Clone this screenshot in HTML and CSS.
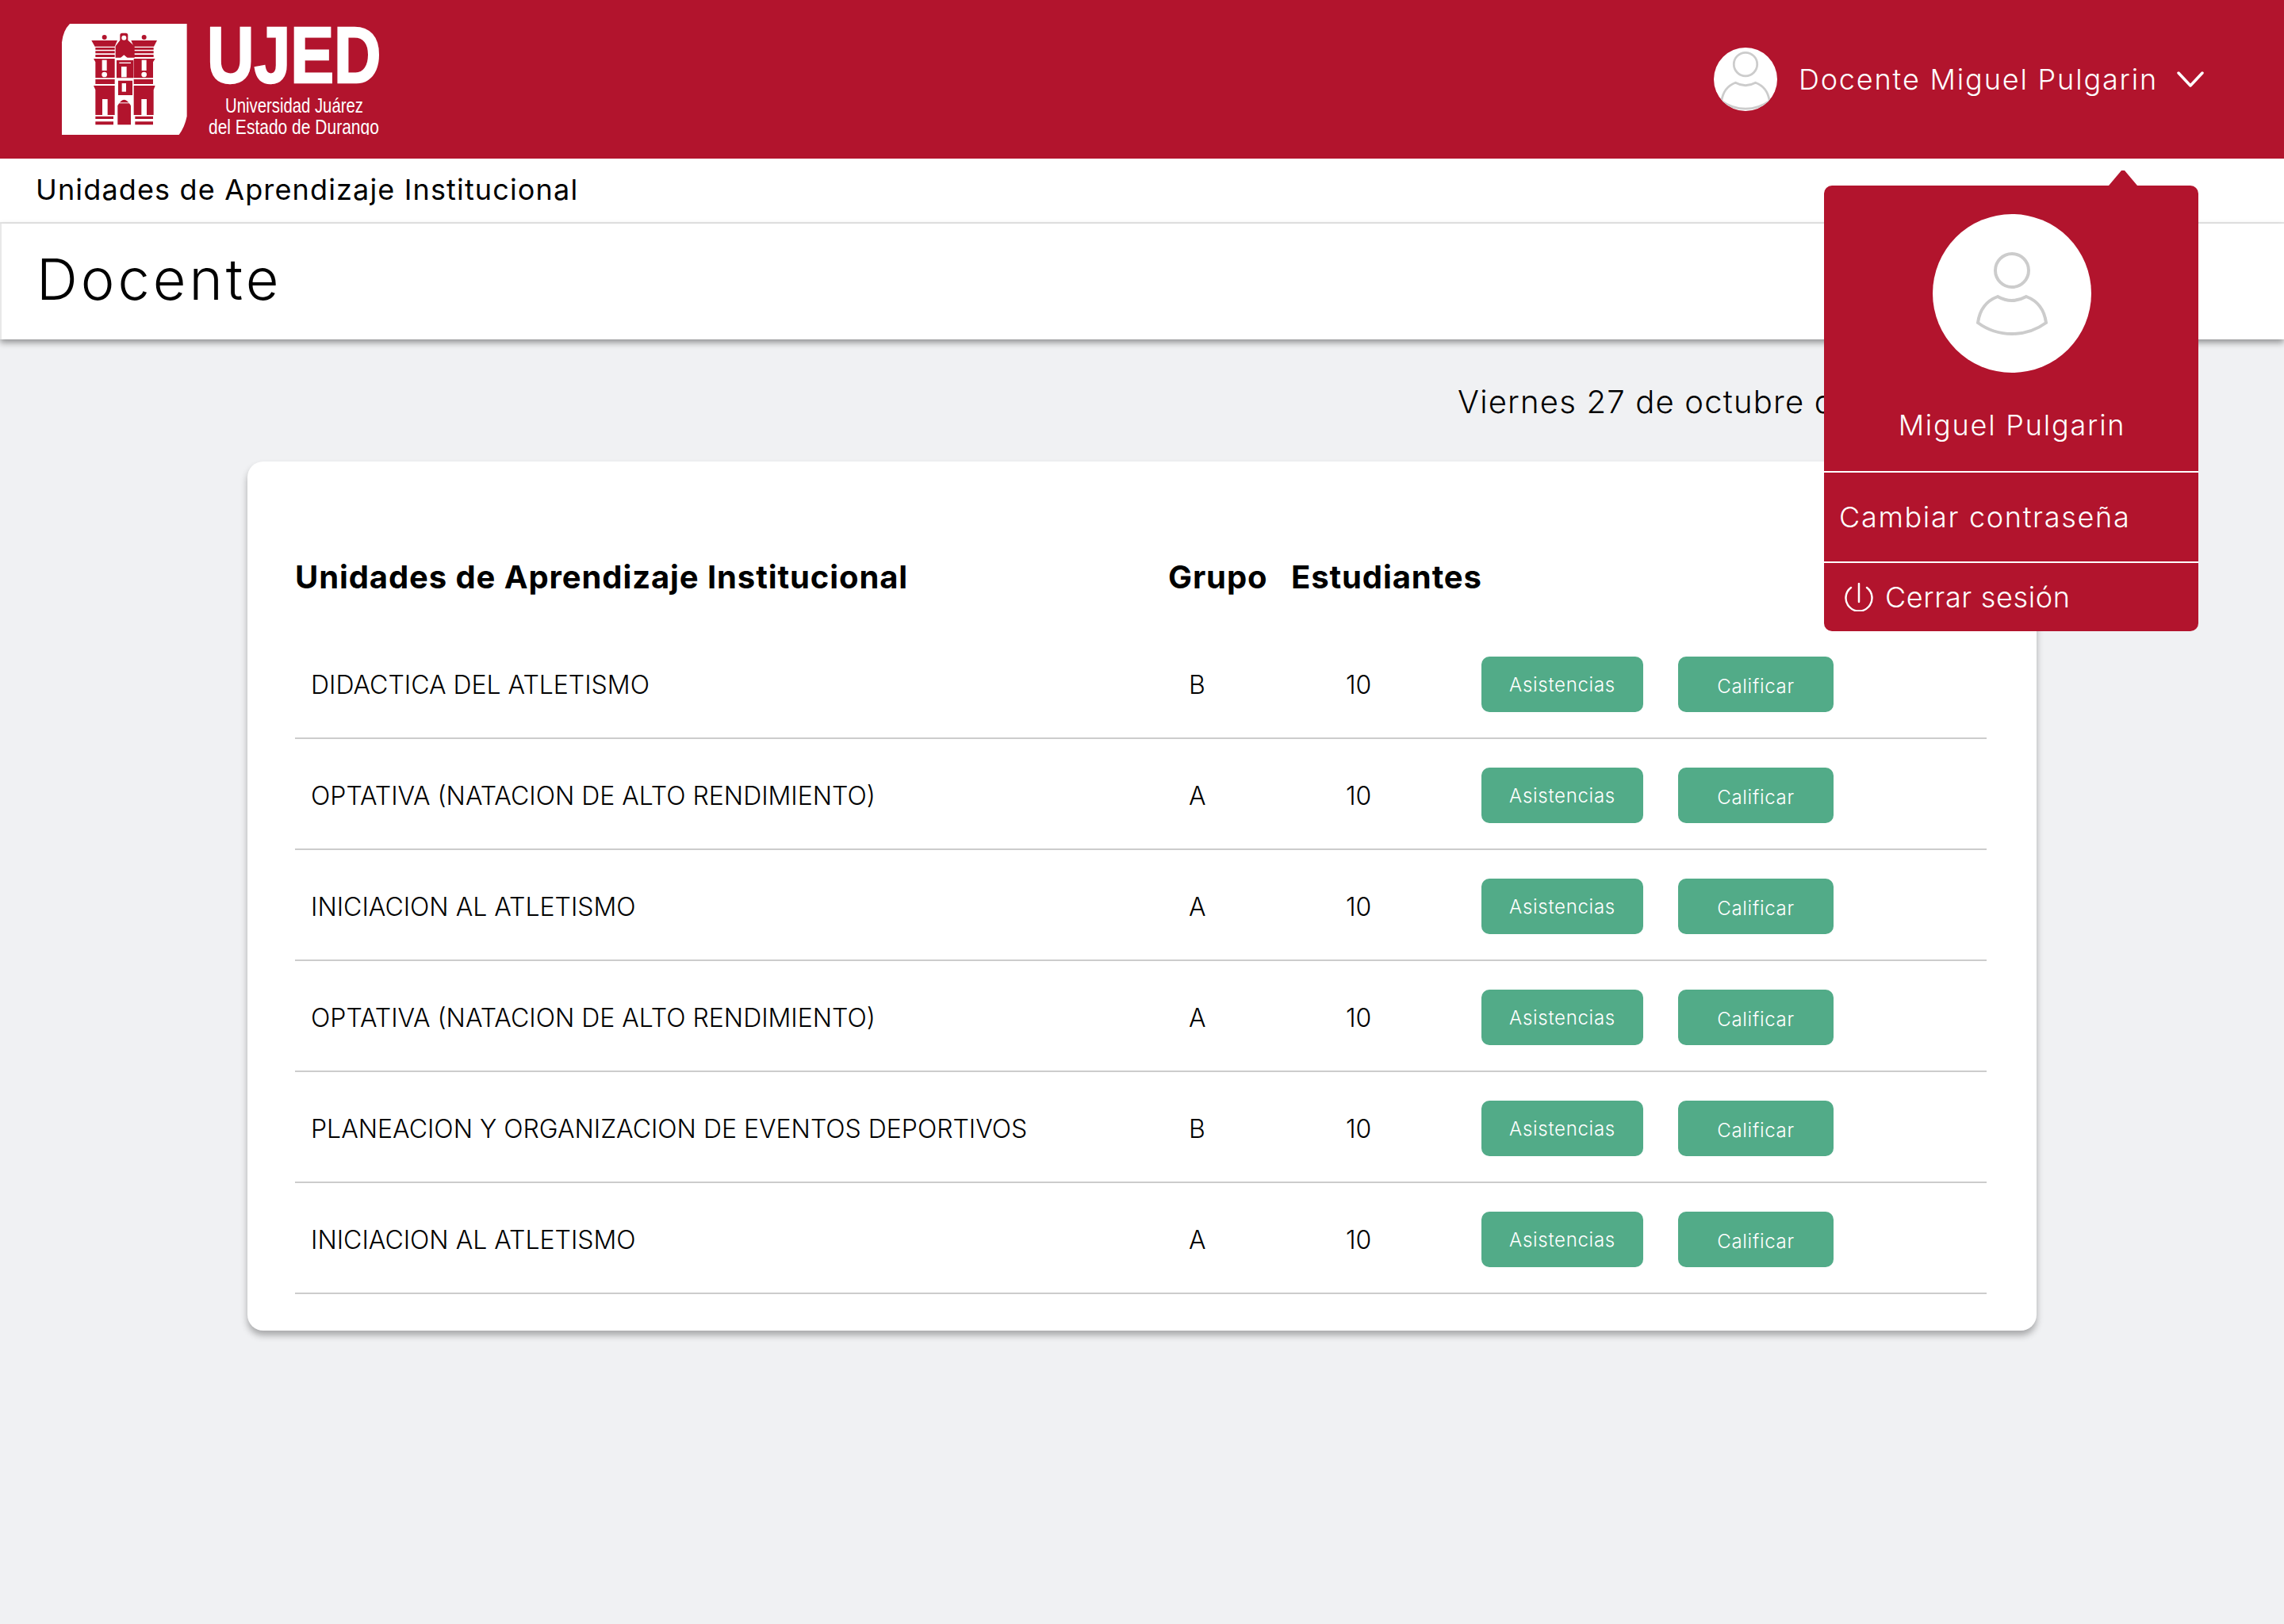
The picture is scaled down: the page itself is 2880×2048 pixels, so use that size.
FILE: index.html
```html
<!DOCTYPE html>
<html lang="es">
<head>
    <meta charset="UTF-8">
    <title>Docente</title>
    <link rel="stylesheet" href="styles.css">
</head>
<body>

<!-- Header -->
<header class="top-header">
    <svg class="logo" viewBox="0 0 400 140" width="400" height="140">
        <defs>
            <clipPath id="logo-clip"><rect width="400" height="140"/></clipPath>
        </defs>
        <g transform="translate(-18.33 -20) scale(0.3333)">
            <path fill="#fff" d="M55 480V130Q60 85 85 60H528V410Q520 450 498 480Z"/>
            <g fill="#b2142d">
                <circle cx="216" cy="111" r="9"/>
                <circle cx="366" cy="111" r="9"/>
                <path d="M167 123H265L255 146H180Z"/>
                <path d="M317 123H415L403 146H327Z"/>
                <path d="M182 150H255V158H182ZM182 163H255V172H182ZM182 177H255V186H182Z"/>
                <path d="M327 150H402V158H327ZM327 163H402V172H327ZM327 177H402V186H327Z"/>
                <path d="M275 103Q275 95 283 95H297Q305 95 305 103V122L330 145V188H258V145L275 122Z"/>
                <path d="M175 192H255V265H182V205Z"/>
                <path d="M327 192H408L400 205V265H327Z"/>
                <path d="M182 270H255V288H182ZM327 270H400V288H327Z"/>
                <path d="M175 294H255V405H182V310Z"/>
                <path d="M327 294H408L402 310V405H327Z"/>
                <path d="M182 410H250V420H182ZM182 430H250V442H182ZM332 410H400V420H332ZM332 430H400V442H332Z"/>
                <path d="M262 198H326V265H262ZM268 275H322V330H268Z"/>
                <path d="M266 442V370Q290 325 316 370V442Z"/>
            </g>
            <g fill="#fff">
                <circle cx="290" cy="113" r="9"/>
                <path d="M290 178L304 190H276Z"/>
                <rect x="207" y="197" width="18" height="40"/>
                <rect x="357" y="197" width="18" height="40"/>
                <circle cx="216" cy="252" r="10"/>
                <circle cx="366" cy="252" r="10"/>
                <rect x="208" y="345" width="20" height="60"/>
                <rect x="356" y="345" width="20" height="60"/>
                <rect x="280" y="222" width="20" height="40"/>
                <rect x="282" y="285" width="16" height="32"/>
                <rect x="272" y="206" width="44" height="4"/>
                <rect x="262" y="358" width="58" height="3"/>
            </g>
        </g>
        <g clip-path="url(#logo-clip)">
            <text class="logo-name" transform="translate(183 74) scale(0.815 1)">UJED</text>
            <text class="logo-sub" transform="translate(206 112) scale(0.782 1)">Universidad Juárez</text>
            <text class="logo-sub" transform="translate(185 139) scale(0.8085 1)">del Estado de Durango</text>
        </g>
    </svg>

    <div class="user-menu">
        <svg class="avatar-small" viewBox="43 41 114 114">
            <circle class="person" cx="100" cy="71" r="21"/>
            <path class="person" d="M82 104Q100 114 118 104C134 110 141 122 143 137Q124 151 100 151Q76 151 57 137C59 122 66 110 82 104Z"/>
        </svg>
        <span class="user-name">Docente Miguel Pulgarin</span>
        <svg class="chevron" viewBox="0 0 34 20" width="34" height="20">
            <path d="M2 2L17 18L32 2" fill="none" stroke="#fff" stroke-width="3.5" stroke-linecap="round" stroke-linejoin="round"/>
        </svg>
    </div>
</header>

<!-- Page title -->
<div class="breadcrumb">Unidades de Aprendizaje Institucional</div>
<div class="page-title">
    <h1>Docente</h1>
</div>

<!-- User dropdown -->
<div class="user-dropdown">
    <div class="dropdown-profile">
        <svg class="avatar-large" viewBox="0 0 200 200">
            <circle class="person" cx="100" cy="71" r="21"/>
            <path class="person" d="M82 104Q100 114 118 104C134 110 141 122 143 137Q124 151 100 151Q76 151 57 137C59 122 66 110 82 104Z"/>
        </svg>
        <span class="dropdown-name">Miguel Pulgarin</span>
    </div>
    <a class="dropdown-item item-password">Cambiar contraseña</a>
    <a class="dropdown-item item-logout">
        <svg class="power-icon" viewBox="0 0 36 36" width="36" height="36">
            <path d="M8 6A16.5 16.5 0 1 0 28 6" fill="none" stroke="#fff" stroke-width="2.5" stroke-linecap="round"/>
            <path d="M18 1V24" fill="none" stroke="#fff" stroke-width="2.5" stroke-linecap="round"/>
        </svg>
        Cerrar sesión
    </a>
</div>

<!-- Main content -->
<main>
    <p class="date">Viernes 27 de octubre de 2023</p>

    <section class="card">
        <div class="row row-head">
            <div>Unidades de Aprendizaje Institucional</div>
            <div>Grupo</div>
            <div class="head-students">Estudiantes</div>
        </div>

        <div class="row">
            <div class="cell-name">DIDACTICA DEL ATLETISMO</div>
            <div class="cell-group">B</div>
            <div class="cell-count">10</div>
            <div><a class="btn btn-attendance">Asistencias</a></div>
            <div><a class="btn btn-grade">Calificar</a></div>
        </div>
        <div class="row">
            <div class="cell-name">OPTATIVA (NATACION DE ALTO RENDIMIENTO)</div>
            <div class="cell-group">A</div>
            <div class="cell-count">10</div>
            <div><a class="btn btn-attendance">Asistencias</a></div>
            <div><a class="btn btn-grade">Calificar</a></div>
        </div>
        <div class="row">
            <div class="cell-name">INICIACION AL ATLETISMO</div>
            <div class="cell-group">A</div>
            <div class="cell-count">10</div>
            <div><a class="btn btn-attendance">Asistencias</a></div>
            <div><a class="btn btn-grade">Calificar</a></div>
        </div>
        <div class="row">
            <div class="cell-name">OPTATIVA (NATACION DE ALTO RENDIMIENTO)</div>
            <div class="cell-group">A</div>
            <div class="cell-count">10</div>
            <div><a class="btn btn-attendance">Asistencias</a></div>
            <div><a class="btn btn-grade">Calificar</a></div>
        </div>
        <div class="row">
            <div class="cell-name">PLANEACION Y ORGANIZACION DE EVENTOS DEPORTIVOS</div>
            <div class="cell-group">B</div>
            <div class="cell-count">10</div>
            <div><a class="btn btn-attendance">Asistencias</a></div>
            <div><a class="btn btn-grade">Calificar</a></div>
        </div>
        <div class="row">
            <div class="cell-name">INICIACION AL ATLETISMO</div>
            <div class="cell-group">A</div>
            <div class="cell-count">10</div>
            <div><a class="btn btn-attendance">Asistencias</a></div>
            <div><a class="btn btn-grade">Calificar</a></div>
        </div>
    </section>
</main>

</body>
</html>
```

FILE: styles.css
```css
body {
    margin: 0;
    min-height: 2048px;
    background-color: #f0f1f3;
    color: #000;
    font-family: Inter, "Noto Sans", sans-serif;
    font-weight: 300;
}

/* Header */
.top-header {
    display: flex;
    justify-content: space-between;
    align-items: center;
    height: 200px;
    padding: 0 101px 0 78px;
    background-color: #b2142d;
    color: #fff;
}

.logo {
    display: block;
    overflow: visible;
}

.logo-name {
    fill: #fff;
    stroke: #fff;
    stroke-width: 2.5px;
    font-family: "Liberation Sans", sans-serif;
    font-size: 101px;
    font-weight: bold;
}

.logo-sub {
    fill: #fff;
    font-family: "Liberation Sans", sans-serif;
    font-size: 26px;
}

.user-menu {
    display: flex;
    align-items: center;
}

.avatar-small {
    width: 80px;
    height: 80px;
    margin-right: 27px;
    border-radius: 50%;
    background-color: #fff;
}

.person {
    fill: none;
    stroke: #ccc;
    stroke-width: 4px;
}

.user-name {
    font-size: 36px;
    letter-spacing: 1.85px;
}

.chevron {
    margin-left: 24px;
}

/* Page title */
.breadcrumb {
    height: 80px;
    padding-left: 45px;
    border-bottom: 2px solid #e8e8e8;
    background-color: #fff;
    font-size: 36px;
    font-weight: 400;
    letter-spacing: 1.15px;
    line-height: 78px;
}

.page-title {
    height: 146px;
    padding-left: 44px;
    border-left: 2px solid #e8e8e8;
    background-color: #fff;
    box-shadow: 0 4px 8px rgba(0, 0, 0, 0.4);
}

.page-title h1 {
    margin: 0;
    font-size: 72px;
    font-weight: 300;
    letter-spacing: 4px;
    line-height: 140px;
}

/* User dropdown */
.user-dropdown {
    position: absolute;
    top: 234px;
    left: 2300px;
    z-index: 10;
    display: flex;
    flex-direction: column;
    width: 472px;
    height: 562px;
    border-radius: 10px;
    background-color: #b2142d;
    color: #fff;
}

.user-dropdown::before {
    content: "";
    position: absolute;
    top: -21px;
    left: 359px;
    width: 36px;
    height: 21px;
    background-color: #b2142d;
    clip-path: polygon(0 100%, 16px 2px, 20px 2px, 100% 100%);
}

.dropdown-profile {
    display: flex;
    flex-direction: column;
    align-items: center;
    height: 360px;
    box-sizing: border-box;
    padding: 36px 0 0 2px;
}

.avatar-large {
    width: 200px;
    height: 200px;
    border-radius: 50%;
    background-color: #fff;
}

.dropdown-name {
    margin-top: 44px;
    font-size: 36px;
    letter-spacing: 1.8px;
}

.dropdown-item {
    display: flex;
    align-items: center;
    box-sizing: border-box;
    border-top: 2px solid #fff;
    font-size: 36px;
}

.item-password {
    height: 114px;
    padding-left: 19px;
    letter-spacing: 1.7px;
}

.item-logout {
    height: 88px;
    padding: 0 0 1px 26px;
    letter-spacing: 0.65px;
}

.power-icon {
    margin-right: 15px;
}

/* Main content */
.date {
    margin: 50px 0 46px 1838px;
    font-size: 40px;
    font-weight: 300;
    letter-spacing: 1.2px;
    line-height: 58px;
    white-space: nowrap;
}

.card {
    width: 2256px;
    box-sizing: border-box;
    margin-left: 312px;
    padding: 82px 63px 46px 60px;
    border-radius: 20px;
    background-color: #fff;
    box-shadow: 0 6px 8px rgba(0, 0, 0, 0.3);
}

.row {
    display: grid;
    grid-template-columns: 1101px 157px 238px 248px 1fr;
    align-items: center;
    height: 140px;
    box-sizing: border-box;
    padding-top: 4px;
    border-bottom: 2px solid #ccc;
    font-size: 32px;
}

.row-head {
    height: 128px;
    padding-top: 0;
    padding-bottom: 2px;
    border-bottom: none;
    font-size: 40px;
    font-weight: 700;
    letter-spacing: 0.9px;
}

.head-students {
    margin-left: -2px;
}

.cell-name {
    padding-left: 20px;
    letter-spacing: 0;
}

.cell-group {
    padding-left: 26px;
}

.cell-count {
    padding-left: 67px;
}

.btn {
    display: flex;
    justify-content: center;
    align-items: center;
    height: 70px;
    border-radius: 10px;
    background-color: #52ab88;
    color: #fff;
    font-size: 24px;
    letter-spacing: 0.7px;
}

.btn-attendance {
    width: 204px;
}

.btn-grade {
    width: 196px;
    padding-top: 4px;
    box-sizing: border-box;
}
```
